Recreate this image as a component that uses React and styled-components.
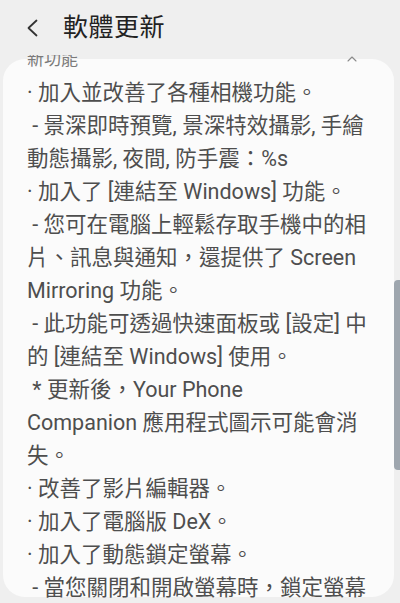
import styled, { createGlobalStyle } from "styled-components"
import { ChevronUp } from "lucide-react"

const lines = [
  "· 加入並改善了各種相機功能。",
  " - 景深即時預覽, 景深特效攝影, 手繪",
  "動態攝影, 夜間, 防手震：%s",
  "· 加入了 [連結至 Windows] 功能。",
  " - 您可在電腦上輕鬆存取手機中的相",
  "片、訊息與通知，還提供了 Screen",
  "Mirroring 功能。",
  " - 此功能可透過快速面板或 [設定] 中",
  "的 [連結至 Windows] 使用。",
  " * 更新後，Your Phone",
  "Companion 應用程式圖示可能會消",
  "失。",
  "· 改善了影片編輯器。",
  "· 加入了電腦版 DeX。",
  "· 加入了動態鎖定螢幕。",
  " - 當您關閉和開啟螢幕時，鎖定螢幕",
]

export default function App() {
  return (
    <>
      <Global />
      <Screen>
        <Header>
          <BackButton>
            <svg width="12" height="18" viewBox="0 0 12 18">
              <path d="M10.5 1.5 L2.5 9 L10.5 16.5" fill="none" stroke="#333" strokeWidth="1.8" strokeLinecap="round" strokeLinejoin="round" />
            </svg>
          </BackButton>
          <Title>軟體更新</Title>
        </Header>
        <Viewport>
          <Card>
            <SectionRow>
              <SectionTitle>新功能</SectionTitle>
              <ChevronUp size={16} color="#8a8a8a" strokeWidth={1.6} />
            </SectionRow>
            <Body>
              {lines.map((l, i) => (
                <Line key={i}>{l}</Line>
              ))}
            </Body>
          </Card>
          <Scrollbar />
        </Viewport>
      </Screen>
    </>
  )
}

const Global = createGlobalStyle`
  html, body {
    margin: 0;
    padding: 0;
    background: #efefef;
  }
  body {
    font-family: Roboto, "Noto Sans CJK TC", sans-serif;
  }
`

const Screen = styled.div`
  width: 400px;
  height: 603px;
  background: #efefef;
  display: flex;
  flex-direction: column;
  overflow: hidden;
`

const Header = styled.div`
  height: 55px;
  flex-shrink: 0;
  display: flex;
  align-items: center;
  padding-left: 26px;
  gap: 25px;
  box-sizing: border-box;
`

const BackButton = styled.div`
  display: flex;
  align-items: center;
  width: 12px;
  height: 18px;
  margin-top: 1px;
`

const Title = styled.div`
  font-size: 25px;
  color: #222;
  letter-spacing: 0.5px;
  line-height: 30px;
`

const Viewport = styled.div`
  flex: 1;
  min-height: 0;
  position: relative;
  overflow: hidden;
  padding: 4px 6px 6px 3px;
  display: flex;
  flex-direction: column;
`

const Card = styled.div`
  flex: 1;
  min-height: 0;
  background: #fbfbfb;
  border-radius: 22px;
  padding: 0 20px 0 24px;
`

const SectionRow = styled.div`
  display: flex;
  justify-content: space-between;
  align-items: center;
  margin-top: -10px;
  height: 20px;
  padding-right: 14px;
`

const SectionTitle = styled.div`
  font-size: 17px;
  line-height: 20px;
  color: #7a7a7a;
`

const Body = styled.div`
  margin-top: 7px;
`

const Line = styled.div`
  font-size: 21.5px;
  line-height: 33px;
  color: #4e4e4e;
  white-space: pre;
`

const Scrollbar = styled.div`
  position: absolute;
  right: 0;
  top: 225px;
  width: 6px;
  height: 190px;
  border-radius: 4px 0 0 4px;
  background: #9ea6ae;
`
